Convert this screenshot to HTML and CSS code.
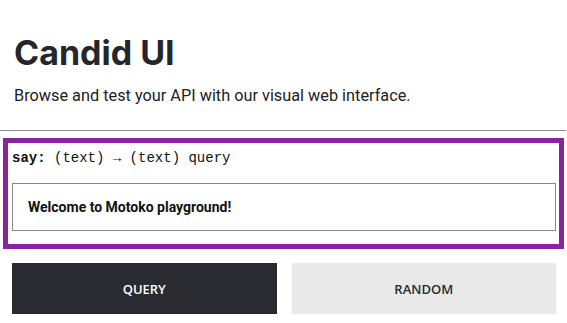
FILE: index.html
```html
<html>

<head>
    <link rel="stylesheet" href="styles.css">
</head>

<body>
    <div class="kopf">
        <h1>Candid UI</h1>
        <p>Browse and test your API with our visual web interface.</p>
    </div>

    <div class="linje"></div>

    <div class="metode">
        <div class="signatur"><b>say:</b> (text) &rarr; (text) query</div>
        <div class="svar">Welcome to Motoko playground!</div>
    </div>

    <div class="knapper">
        <button class="knapp mork">Query</button>
        <button class="knapp lys">Random</button>
    </div>
</body>

</html>
```

FILE: styles.css
```css
body {
    margin: 0;
    padding: 0;
    font-family: Roboto, "Liberation Sans", sans-serif;
    color: #222;
    background: #fff;
    overflow: hidden;
}

.kopf {
    padding: 0 14px;
}

.kopf h1 {
    font-family: Inter, "Liberation Sans", sans-serif;
    font-size: 34px;
    font-weight: 700;
    color: #24262b;
    margin: 0;
    padding-top: 34px;
    line-height: 38px;
}

.kopf p {
    font-size: 16.3px;
    margin: 14px 0 0;
    line-height: 20px;
}

.linje {
    margin-top: 24px;
    height: 1px;
    background: #8c8c8c;
    margin-right: 1px;
}

.metode {
    margin: 7px 3px 0;
    border: 5px solid #86259f;
    padding: 7px 3px 13px 4px;
}

.signatur {
    font-family: "Liberation Mono", monospace;
    font-size: 14px;
    line-height: 16px;
    color: #111;
}

.svar {
    margin-top: 17px;
    border: 1px solid #888;
    height: 46px;
    display: flex;
    align-items: center;
    padding-left: 15px;
    font-size: 14px;
    font-weight: 700;
    color: #111;
}

.knapper {
    display: flex;
    gap: 15px;
    padding: 14px 11px 0 12px;
}

.knapp {
    flex: 1;
    height: 51px;
    border: none;
    font-family: "Open Sans", sans-serif;
    font-size: 13px;
    font-weight: 600;
    text-transform: uppercase;
}

.mork {
    background: #2a2b30;
    color: #fff;
}

.lys {
    background: #e9e9e9;
    color: #2a2b30;
}
```
